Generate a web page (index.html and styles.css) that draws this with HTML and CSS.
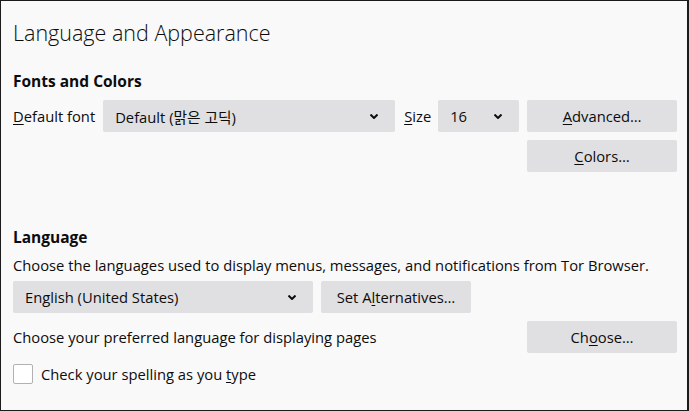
FILE: index.html
```html
<!DOCTYPE html>
<html lang="en">
<head>
    <meta charset="UTF-8">
    <title>Language and Appearance</title>
    <link rel="stylesheet" href="styles.css">
</head>
<body>
    <div class="pane">
        <h1>Language and Appearance</h1>

        <!-- Fonts and Colors -->
        <h2 class="fonts-title">Fonts and Colors</h2>
        <div class="row">
            <span class="label"><u>D</u>efault font</span>
            <div class="select font-select">
                <span>Default (맑은 고딕)</span>
                <svg class="chevron" viewBox="0 0 8 5"><path d="M0.5 0.5 L4 4 L7.5 0.5" /></svg>
            </div>
            <span class="label size-label"><u>S</u>ize</span>
            <div class="select size-select">
                <span>16</span>
                <svg class="chevron" viewBox="0 0 8 5"><path d="M0.5 0.5 L4 4 L7.5 0.5" /></svg>
            </div>
            <button class="btn"><u>A</u>dvanced…</button>
        </div>
        <div class="row right">
            <button class="btn"><u>C</u>olors…</button>
        </div>

        <!-- Language -->
        <h2 class="lang-title">Language</h2>
        <p class="desc">Choose the languages used to display menus, messages, and notifications from Tor Browser.</p>
        <div class="row">
            <div class="select lang-select">
                <span>English (United States)</span>
                <svg class="chevron" viewBox="0 0 8 5"><path d="M0.5 0.5 L4 4 L7.5 0.5" /></svg>
            </div>
            <button class="btn">Set A<u>l</u>ternatives…</button>
        </div>
        <div class="row between">
            <span class="label">Choose your preferred language for displaying pages</span>
            <button class="btn">Ch<u>o</u>ose…</button>
        </div>
        <label class="check">
            <span class="box"></span>
            <span>Check your spelling as you <u>t</u>ype</span>
        </label>
    </div>
</body>
</html>
```

FILE: styles.css
```css
/* base */
html, body {
    margin: 0;
    height: 100%;
}
body {
    box-sizing: border-box;
    border: 1px solid #1b1b1b;
    border-right-width: 2px;
    background: #f9f9fa;
    color: #0c0c0d;
    font-family: "Open Sans", "Noto Sans CJK KR", sans-serif;
    font-size: 14.75px;
}
.pane {
    padding: 0 10px 0 12px;
}
u {
    text-decoration: underline;
    text-underline-offset: 2px;
}

/* headings */
h1 {
    margin: 0;
    padding-top: 16px;
    height: 31px;
    line-height: 31px;
    font-size: 21.5px;
    font-weight: 300;
}
h2 {
    margin: 0;
    font-size: 15.5px;
    font-weight: 700;
    line-height: 22px;
}
.fonts-title {
    margin-top: 22px;
    margin-bottom: 8px;
}
.lang-title {
    margin-top: 54px;
}

/* rows */
.row {
    display: flex;
    align-items: center;
    height: 32px;
    margin-bottom: 8px;
}
.right {
    justify-content: flex-end;
}
.between {
    justify-content: space-between;
}
.label {
    white-space: nowrap;
}
.desc {
    margin: 7px 0 6px;
    line-height: 20px;
    white-space: nowrap;
}

/* dropdowns */
.select {
    display: flex;
    align-items: center;
    justify-content: space-between;
    height: 32px;
    box-sizing: border-box;
    padding: 0 17px 0 12px;
    background: #e0e0e2;
    border-radius: 2px;
    flex: none;
}
.font-select {
    width: 292px;
    margin-left: 8px;
}
.size-label {
    margin-left: 9px;
}
.size-select {
    width: 81px;
    margin-left: 7px;
}
.lang-select {
    width: 300px;
    padding-left: 12px;
}
.chevron {
    width: 8px;
    height: 5px;
    fill: none;
    stroke: #0c0c0d;
    stroke-width: 2;
}

/* buttons */
.btn {
    height: 32px;
    width: 150px;
    flex: none;
    border: none;
    border-radius: 2px;
    background: #e0e0e2;
    color: #0c0c0d;
    font: inherit;
    padding: 0;
    margin-left: 8px;
}
.row.right .btn,
.row.between .btn {
    margin-left: 0;
}

/* checkbox */
.check {
    display: flex;
    align-items: center;
    gap: 8px;
    margin-top: 11px;
}
.box {
    width: 18px;
    height: 18px;
    border: 1px solid #b1b1b3;
    border-radius: 2px;
    background: #fff;
}
```
